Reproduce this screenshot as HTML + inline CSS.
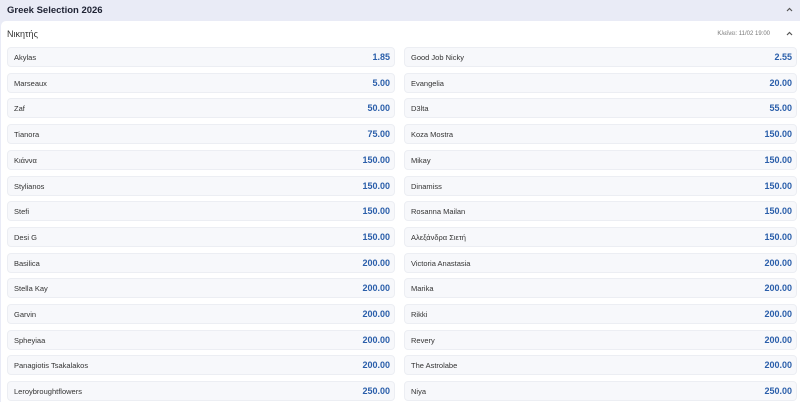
<!DOCTYPE html><html><head><style>
body{margin:0;width:800px;height:402px;overflow:hidden;background:#e9ebf6;font-family:"Liberation Sans","DejaVu Sans",sans-serif;}
.h{height:21px;position:relative;}
.h b{position:absolute;left:7px;top:5px;font-size:9.5px;color:#1e2233;}
.h svg{position:absolute;right:7px;top:7px;}
.p{position:absolute;left:1px;top:21px;width:799px;height:381px;background:#fff;border-radius:5px 0 0 0;}
.t{position:absolute;left:6px;top:8px;font-size:9px;color:#333;}
.k{position:absolute;right:30px;top:10px;font-size:6px;color:#777;}
.p svg{position:absolute;right:7px;top:10px;}
.r{position:absolute;height:20px;width:388px;background:#f7f8fb;border:1px solid #eceef3;border-radius:4px;box-sizing:border-box;font-size:7.5px;color:#333;}
.r span{position:absolute;left:6px;top:5px;}
.r i{position:absolute;right:4px;top:4px;font-style:normal;font-weight:bold;font-size:9px;color:#2a5eaa;}
</style></head><body>
<div class="h"><b>Greek Selection 2026</b><svg width="7" height="5" viewBox="0 0 7 5"><path d="M1 4L3.5 1.5L6 4" stroke="#555" stroke-width="1.2" fill="none"/></svg></div>
<div class="p"><span class="t">Νικητής</span><span class="k">Κλείνει: 11/02 19:00</span><svg width="7" height="5" viewBox="0 0 7 5"><path d="M1 4L3.5 1.5L6 4" stroke="#555" stroke-width="1.2" fill="none"/></svg></div>
<div id="g"></div>
<script>
var L=[["Akylas","1.85"],["Marseaux","5.00"],["Zaf","50.00"],["Tianora","75.00"],["Κιάννα","150.00"],["Stylianos","150.00"],["Stefi","150.00"],["Desi G","150.00"],["Basilica","200.00"],["Stella Kay","200.00"],["Garvin","200.00"],["Spheyiaa","200.00"],["Panagiotis Tsakalakos","200.00"],["Leroybroughtflowers","250.00"]];
var R=[["Good Job Nicky","2.55"],["Evangelia","20.00"],["D3lta","55.00"],["Koza Mostra","150.00"],["Mikay","150.00"],["Dinamiss","150.00"],["Rosanna Mailan","150.00"],["Αλεξάνδρα Σιετή","150.00"],["Victoria Anastasia","200.00"],["Marika","200.00"],["Rikki","200.00"],["Revery","200.00"],["The Astrolabe","200.00"],["Niya","250.00"]];
var h="";for(var i=0;i<14;i++){var y=47+i*25.7;
h+='<div class="r" style="left:7px;top:'+y+'px"><span>'+L[i][0]+'</span><i>'+L[i][1]+'</i></div>';
h+='<div class="r" style="left:404px;top:'+y+'px;width:393px"><span>'+R[i][0]+'</span><i>'+R[i][1]+'</i></div>';}
document.getElementById("g").innerHTML=h;
</script>
</body></html>
